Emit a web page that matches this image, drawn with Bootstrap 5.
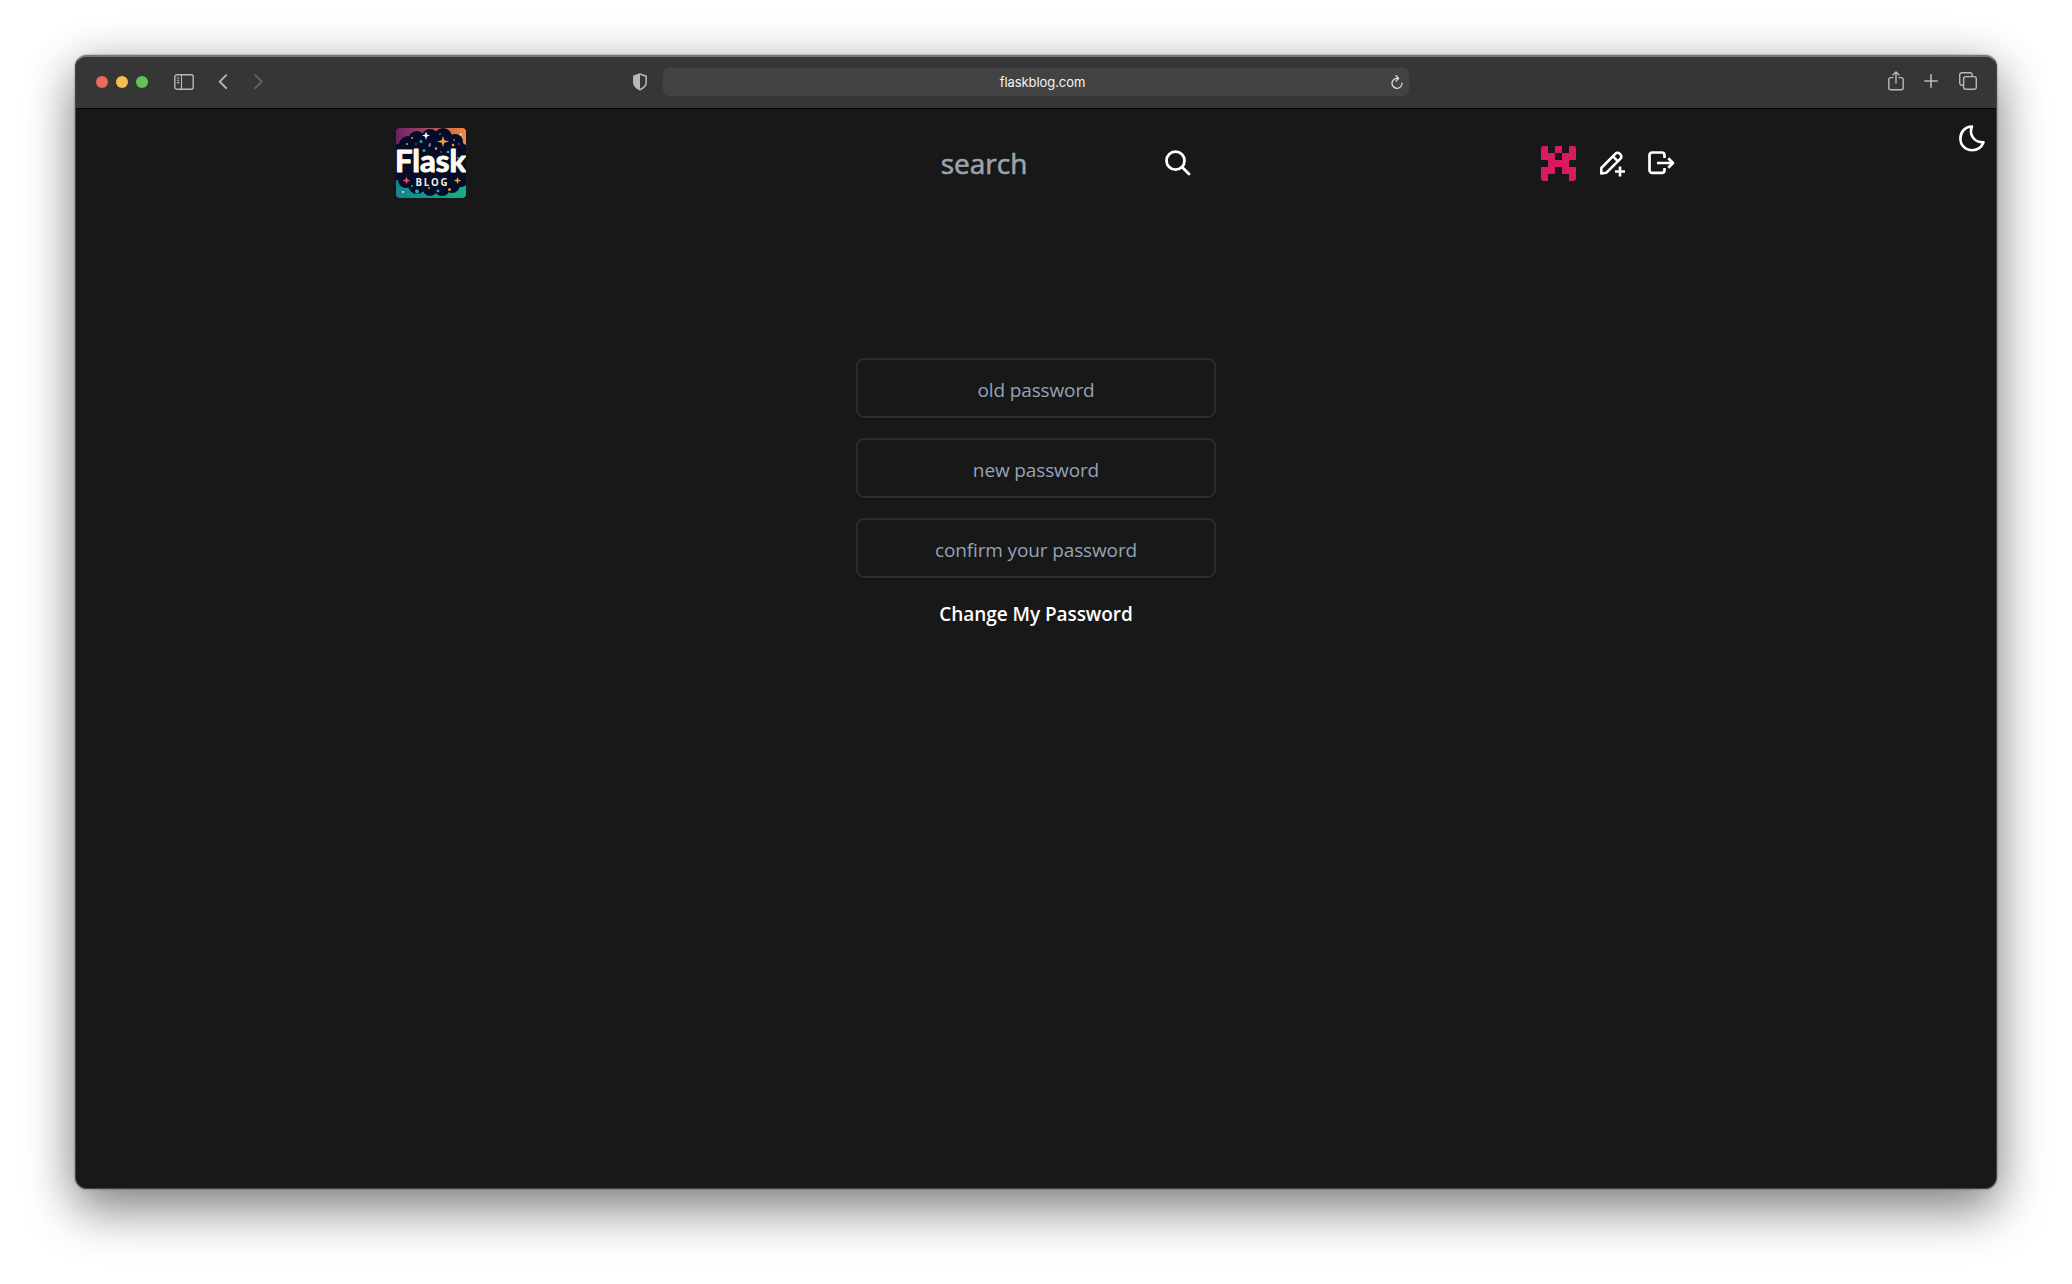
<!DOCTYPE html>
<html lang="en">
<head>
<meta charset="utf-8">
<title>FlaskBlog</title>
<link href="https://cdn.jsdelivr.net/npm/bootstrap@5.3.0/dist/css/bootstrap.min.css" rel="stylesheet">
<style>
body{background:#fff;font-family:"Open Sans","Noto Sans",sans-serif;height:1284px;overflow:hidden}
svg{display:block;flex:none}
.browser{width:1922px;height:1134px;margin:55px 0 0 75px;border-radius:12px;background:#181818;border:1px solid #454545;border-top:2px solid #767776;box-shadow:0 0 2px rgba(0,0,0,.5),0 22px 50px rgba(0,0,0,.42),0 4px 48px rgba(0,0,0,.16)}
.toolbar{height:52px;background:#363636;border-bottom:1px solid #050505;border-radius:10px 10px 0 0;color:#b9b9b9;padding:0 19px 1px 20px}
.light{width:12px;height:12px}
.address{width:746px;height:28px;background:#434343;border-radius:6px;margin-left:16px;padding-right:6px;font:13px/28px Inter,"Liberation Sans",sans-serif;letter-spacing:-.08px;color:#f4f4f4}
.address .url{padding-left:31px}
.toolbar-start{width:557px}
.topnav{width:1280px;height:108px;padding:0}
.find{width:356px;margin-left:60px}
.find input{width:257px;font-size:28px;font-weight:500;color:#9ca3af}
.field::placeholder{color:#94a3b8;opacity:1}
.find input::placeholder{color:#9ca3af;opacity:1;-webkit-text-stroke:.6px #9ca3af}
.ghost{background:none;border:0;outline:0;padding:0;text-align:center}
.theme{top:16px;right:11px}
.pwform{width:360px;margin-top:141px;gap:20px}
.field{width:360px;height:60px;background:transparent;border:2px solid #2b2b30;border-radius:8px;text-align:center;font-size:19px;letter-spacing:-.13px;color:#fff;padding:3px 0 0;box-shadow:0 1px 2px rgba(0,0,0,.2)}
.submit{color:#fff;font-size:19px;font-weight:600;letter-spacing:-.06px;line-height:28px;margin-top:2px}
</style>
<script src="https://cdn.jsdelivr.net/npm/bootstrap@5.3.0/dist/js/bootstrap.bundle.min.js"></script>
</head>
<body>
<div class="browser">
  <div class="toolbar d-flex align-items-center">
    <div class="toolbar-start d-flex align-items-center">
      <div class="d-flex gap-2">
        <span class="light rounded-circle" style="background:#ec695e"></span>
        <span class="light rounded-circle" style="background:#f4bf50"></span>
        <span class="light rounded-circle" style="background:#61c455"></span>
      </div>
      <svg style="margin-left:26px" width="20" height="16" viewBox="0 0 20 16" fill="none" stroke="currentColor" stroke-width="1.4"><rect x=".8" y=".8" width="18.4" height="14.4" rx="2"/><path d="M7.5 1v14M2.8 4h2.6M2.8 6.3h2.6M2.8 8.6h2.6" stroke-width="1.1"/></svg>
      <svg style="margin-left:24px" width="10" height="16" viewBox="0 0 10 16" fill="none" stroke="currentColor" stroke-width="1.9" stroke-linecap="round" stroke-linejoin="round"><path d="M8.2 1.2 1.7 7.700l6.5 6.5"/></svg>
      <svg style="margin-left:26px" width="10" height="16" viewBox="0 0 10 16" fill="none" stroke="#656565" stroke-width="1.9" stroke-linecap="round" stroke-linejoin="round"><path d="M1.2 1.2 7.7 7.700l-6.5 6.5"/></svg>
    </div>
    <div class="d-flex align-items-center flex-grow-1" style="margin-left:-20px">
      <svg width="14" height="18" viewBox="0 0 14 18"><path d="M7 1 13.2 3.2V9.2C13.2 12.5 10.6 15 7 16.7 3.4 15 .8 12.5.8 9.2V3.2Z" fill="none" stroke="currentColor" stroke-width="1.5" stroke-linejoin="round"/><path d="M7 .8V16.8C3.3 15 .8 12.5.8 9.2V3.2Z" fill="currentColor"/></svg>
      <div class="address d-flex align-items-center"><span class="url flex-grow-1 text-center">flaskblog.com</span>
        <svg width="12" height="15" viewBox="0 0 12 15" fill="none" stroke="#ddd" stroke-width="1.3" stroke-linecap="round" stroke-linejoin="round"><path d="M7 3.4A5 5 0 1 0 11 8.1M5 .8l2.7 2.6L5 6"/></svg>
      </div>
      <div class="d-flex align-items-center ms-auto">
        <svg width="16" height="20" viewBox="0 0 16 20" fill="none" stroke="currentColor" stroke-width="1.4" stroke-linecap="round" stroke-linejoin="round" style="margin-top:-2px"><path d="M5 6.6H2.8a2 2 0 0 0-2 2v8.2a2 2 0 0 0 2 2h10.4a2 2 0 0 0 2-2V8.600a2 2 0 0 0-2-2H11M8 12V1M5 3.700 8 .9l3 2.800"/></svg>
        <svg style="margin:-2px 0 0 20px" width="14" height="14" viewBox="0 0 14 14" stroke="currentColor" stroke-width="1.6" stroke-linecap="round"><path d="M7 .8v12.400M.8 7h12.400"/></svg>
        <svg style="margin:-2px 0 0 21px" width="18" height="18" viewBox="0 0 18 18" fill="none" stroke="currentColor" stroke-width="1.4"><rect x="4.600" y="4.600" width="12.700" height="12.700" rx="2.200"/><path d="M4.400 13.200H2.900a2.200 2.200 0 0 1-2.200-2.200V2.900A2.200 2.200 0 0 1 2.900.7H11a2.200 2.200 0 0 1 2.200 2.200v1.500"/></svg>
      </div>
    </div>
  </div>

  <main class="position-relative d-flex flex-column align-items-center">
    <nav class="topnav navbar flex-nowrap">
      <a href="#" aria-label="Home" style="margin-top:-1px"><svg width="70" height="70" viewBox="0 0 70 70">
        <defs>
          <linearGradient id="sky" x1="0" x2="1"><stop offset="0" stop-color="#6b2163"/><stop offset=".45" stop-color="#a44a60"/><stop offset="1" stop-color="#f68a3c"/></linearGradient>
          <linearGradient id="sea" x1="0" x2="1"><stop offset="0" stop-color="#16838f"/><stop offset="1" stop-color="#14b184"/></linearGradient>
          <clipPath id="tile"><rect width="70" height="70" rx="4"/></clipPath>
        </defs>
        <g clip-path="url(#tile)">
          <rect width="70" height="36" fill="url(#sky)"/><rect y="36" width="70" height="34" fill="url(#sea)"/>
          <g fill="#040c27"><circle cx="12" cy="17" r="9"/><circle cx="21" cy="12" r="9"/><circle cx="34" cy="9" r="8"/><circle cx="47" cy="9" r="9"/><circle cx="59" cy="14" r="8"/><circle cx="63" cy="23" r="9"/><circle cx="3" cy="25" r="9"/><rect y="20" width="70" height="32"/><circle cx="10" cy="52" r="8"/><circle cx="21" cy="57" r="9"/><circle cx="34" cy="61" r="7"/><circle cx="46" cy="60" r="8"/><circle cx="56" cy="57" r="8"/><circle cx="65" cy="51" r="8"/><rect x="12" y="12" width="45" height="46"/></g>
          <path fill="#fff" d="M30 3.500l1 3 3 1-3 1-1 3.500-1-3.500-3-1 3-1z"/>
          <path fill="#f6a13a" d="M47 8l1.300 4.200 4.700 1.300-4.700 1.300L47 19l-1.300-4.200-4.700-1.300 4.700-1.300zM61.500 49l.9 2.600 2.800.9-2.800.9-.9 2.800-.9-2.800-2.800-.9 2.800-.9z"/>
          <path fill="#f04f6d" d="M10.500 48.500l1 3 3 1-3 1-1 3-1-3-3-1 3-1z"/>
          <g fill="#28a9b3"><circle cx="25" cy="13.500" r="1.500"/><circle cx="33.500" cy="17.500" r="1.300"/><circle cx="28" cy="22.500" r="1.500"/><circle cx="52" cy="24" r="1.300"/><circle cx="21" cy="63.500" r="1.900"/><circle cx="16" cy="58" r="1"/><circle cx="42" cy="63" r="1.400"/><circle cx="62" cy="30" r="1"/></g>
          <g fill="#f49340"><circle cx="16" cy="10" r="1"/><circle cx="11" cy="16" r="1"/><circle cx="40" cy="20.500" r="1.300"/><circle cx="57" cy="17" r="1.300"/><circle cx="53.500" cy="61.500" r="1.500"/><circle cx="44" cy="6" r=".8"/><circle cx="33" cy="60" r="1"/></g>
          <g fill="#f04f6d"><circle cx="34" cy="16" r="1"/><circle cx="20" cy="16" r=".8"/><circle cx="45" cy="24" r=".8"/><circle cx="63" cy="16" r=".8"/></g>
          <g fill="#e9f3e6"><circle cx="65" cy="6.500" r="1"/><circle cx="7" cy="64" r="1"/><circle cx="58" cy="12" r=".7"/></g>
          <text x="-1" y="43.800" textLength="71" lengthAdjust="spacingAndGlyphs" font-family="Lato,sans-serif" font-weight="700" font-size="29.500" fill="#fffbee" stroke="#fffbee" stroke-width="1" stroke-linejoin="round">Flask</text>
          <text x="19.500" y="57.500" textLength="32" font-family="Open Sans,sans-serif" font-weight="700" font-size="9.700" fill="#f5efe4">BLOG</text>
        </g></svg></a>
      <form class="find d-flex align-items-center justify-content-between">
        <input class="ghost" type="text" placeholder="search" aria-label="search">
        <button class="ghost" type="button" aria-label="Search" style="margin-right:21px"><svg width="26" height="26" viewBox="0 0 26 26" fill="none" stroke="#fff" stroke-width="2.800" stroke-linecap="round"><circle cx="10.500" cy="10.700" r="9"/><path d="M17.200 17.200 24 24"/></svg></button>
      </form>
      <div class="d-flex align-items-center" style="padding-right:1px">
        <svg width="35" height="35" viewBox="0 0 5 5"><clipPath id="av"><rect width="5" height="5" rx=".35"/></clipPath><path clip-path="url(#av)" fill="#d81b60" d="M0 0h1v1h1V0h1v1h1V0h1v2H4v1h1v2H4V4H3V3H2v1H1v1H0V3h1V2H0zM2 1v1h1V1z" fill-rule="evenodd"/></svg>
        <svg style="margin-left:24px;margin-top:2px" width="26" height="26" viewBox="0 0 26 26" fill="none" stroke="#fff" stroke-width="2.600" stroke-linejoin="round"><path d="M1.300 22.500V17L15.500 2.700a2.900 2.900 0 0 1 4.100 0l.9.900a2.900 2.900 0 0 1 0 4.100L6.500 21.700Z M13 5.300l5 5"/><path d="M20 15.500v10M15 20.500h10"/></svg>
        <svg style="margin-left:22px" width="27" height="24" viewBox="0 0 27 24" fill="none" stroke="#fff" stroke-width="2.700" stroke-linejoin="round"><path d="M16.500 7V4.200a2.700 2.700 0 0 0-2.700-2.700H4.200a2.700 2.700 0 0 0-2.700 2.700v15a2.700 2.700 0 0 0 2.700 2.700h9.600a2.700 2.700 0 0 0 2.700-2.700V17M9 12h16M20.300 7.200 25 12l-4.700 4.800"/></svg>
      </div>
    </nav>
    <button class="theme ghost position-absolute" aria-label="Theme"><svg width="26" height="27" viewBox="0 0 26 27" fill="none" stroke="#fff" stroke-width="2.600" stroke-linejoin="round"><path d="M13 1.500C10 8.500 14 17.500 24.500 17.300 22.500 22.500 18.500 25.200 13.300 25.200 6.500 25.200 1.400 20.200 1.400 13.400 1.400 6.500 6.200 1.800 13 1.500Z"/></svg></button>
    <form class="pwform d-flex flex-column align-items-center">
      <input class="field" type="text" placeholder="old password">
      <input class="field" type="text" placeholder="new password">
      <input class="field" type="text" placeholder="confirm your password">
      <button class="submit ghost" type="button">Change My Password</button>
    </form>
  </main>
</div>
</body>
</html>
